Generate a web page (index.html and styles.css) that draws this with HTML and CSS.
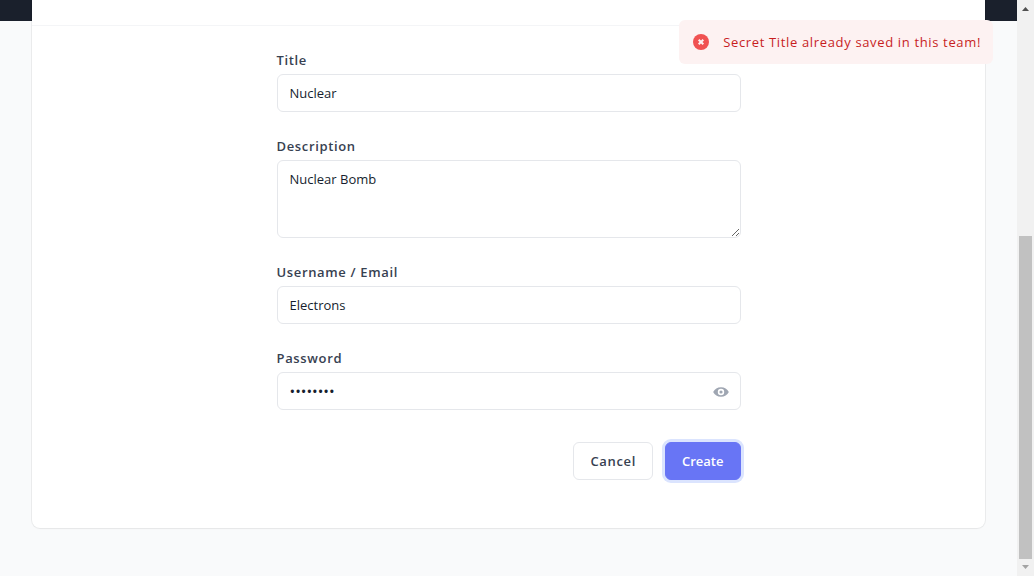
FILE: index.html
```html
<!DOCTYPE html>
<html lang="en">
<head>
<meta charset="utf-8">
<meta name="viewport" content="width=device-width, initial-scale=1">
<title>New secret</title>
<link rel="stylesheet" href="styles.css">
</head>
<body>
<div class="page">
  <main class="content">
    <section class="card">
      <div class="card-head"></div>
      <form class="form">
        <div class="field">
          <label class="label" for="title">Title</label>
          <input class="control" id="title" type="text" value="Nuclear">
        </div>
        <div class="field">
          <label class="label" for="description">Description</label>
          <textarea class="control area" id="description">Nuclear Bomb</textarea>
        </div>
        <div class="field">
          <label class="label" for="username">Username / Email</label>
          <input class="control" id="username" type="text" value="Electrons">
        </div>
        <div class="field">
          <label class="label" for="password">Password</label>
          <div class="reveal">
            <input class="control secret" id="password" type="password" value="electron">
            <button class="eye" type="button" aria-label="Show password">
              <svg width="16" height="16" viewBox="0 0 20 20" fill="currentColor"><path fill-rule="evenodd" d="M.2 10a11 11 0 0 1 19.6 0A11 11 0 0 1 .2 10zM10 14a4 4 0 1 0 0-8 4 4 0 0 0 0 8zm0-2a2 2 0 1 1 0-4 2 2 0 0 1 0 4z"/></svg>
            </button>
          </div>
        </div>
        <div class="actions">
          <button class="btn" type="button">Cancel</button>
          <button class="btn primary" type="submit">Create</button>
        </div>
      </form>
    </section>
  </main>
  <div class="scrollbar" aria-hidden="true">
    <svg class="arrow" width="17" height="17" viewBox="0 0 17 17" fill="#505050"><path d="M5 11h7L8.500 7z"/></svg>
    <div class="thumb"></div>
    <svg class="arrow" width="17" height="17" viewBox="0 0 17 17" fill="#a3a3a3"><path d="M5 6h7L8.500 10z"/></svg>
  </div>
</div>
<div class="toast" role="alert">
  <svg width="16" height="16" viewBox="0 0 16 16"><circle cx="8" cy="8" r="8" fill="#f05252"/><path d="M5.700 5.700l4.600 4.600M10.300 5.700l-4.600 4.600" stroke="#fdf2f2" stroke-width="2" fill="none"/></svg>
  <span>Secret Title already saved in this team!</span>
</div>
</body>
</html>
```
FILE: styles.css
```css
* { box-sizing: border-box; }
body {
  margin: 0;
  font-family: "Open Sans", "Noto Sans", sans-serif;
  font-size: 13px;
  line-height: 20px;
  color: #161e2e;
}
.page { display: flex; height: 100vh; overflow: hidden; }
.content {
  flex: 1;
  padding: 0 32px 48px;
  background: linear-gradient(#1a202c 21px, #f9fafb 21px);
}
.card {
  background: #fff;
  border-radius: 0 0 8px 8px;
  box-shadow: 0 0 0 1px rgba(0, 0, 0, 0.05), 0 1px 2px rgba(0, 0, 0, 0.03);
}
.card-head { height: 26px; border-bottom: 1px solid #f4f5f7; }
.form {
  display: flex;
  flex-direction: column;
  gap: 24px;
  max-width: 464px;
  margin: 0 auto;
  padding: 24px 0 48px;
}
.field { display: flex; flex-direction: column; gap: 4px; }
.label { font-weight: 600; color: #374151; letter-spacing: 0.05em; }
.control {
  display: block;
  width: 100%;
  height: 38px;
  margin: 0;
  padding: 8px 12px;
  border: 1px solid #e5e7eb;
  border-radius: 6px;
  background: #fff;
  color: inherit;
  font: inherit;
}
.area { height: 78px; resize: vertical; }
.secret { font-size: 15px; }
.reveal { position: relative; }
.eye {
  position: absolute;
  top: 0;
  right: 0;
  display: flex;
  align-items: center;
  height: 100%;
  padding: 2px 12px 0;
  border: 0;
  background: none;
  color: #9fa6b2;
}
.actions { display: flex; justify-content: flex-end; gap: 12px; margin-top: 8px; }
.btn {
  padding: 8px 16px;
  border: 1px solid #e5e7eb;
  border-radius: 6px;
  background: #fff;
  color: #374151;
  font: inherit;
  font-weight: 600;
  letter-spacing: 0.05em;
}
.primary {
  border-color: #6875f5;
  background: #6875f5;
  color: #fff;
  letter-spacing: normal;
  box-shadow: 0 0 0 3px #dbe4fe;
}
.scrollbar {
  display: flex;
  flex-direction: column;
  justify-content: space-between;
  width: 17px;
  background: #f1f1f1;
}
.arrow { display: block; }
.thumb { height: 56%; margin: auto 2px 0; background: #c1c1c1; }
.toast {
  position: fixed;
  top: 20px;
  right: 41px;
  display: flex;
  align-items: center;
  gap: 14px;
  padding: 12px 12px 12px 14px;
  border-radius: 6px;
  background: #fdf2f2;
  color: #c81e1e;
  letter-spacing: 0.05em;
}
```
